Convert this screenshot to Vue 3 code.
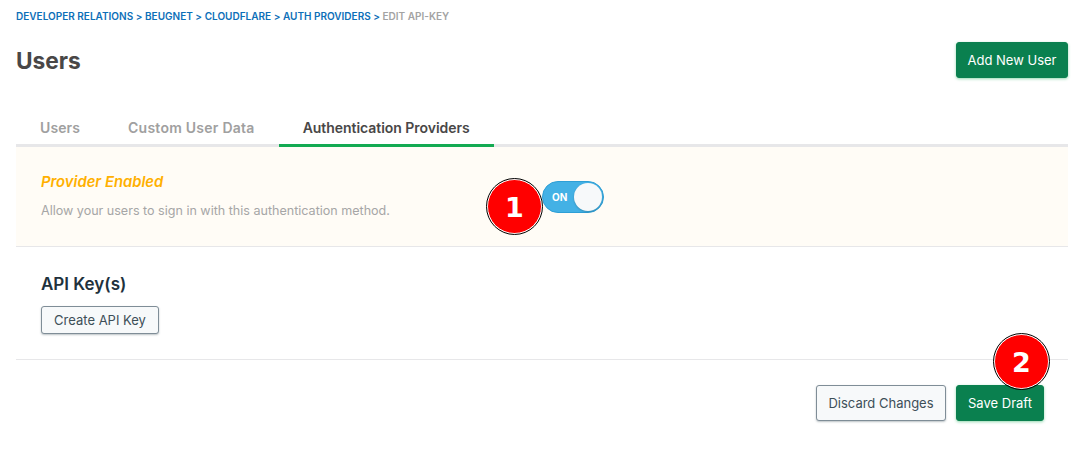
<script setup>
const crumbs = ['DEVELOPER RELATIONS', 'BEUGNET', 'CLOUDFLARE', 'AUTH PROVIDERS']
const tabs = [
  { label: 'Users', key: 'users', active: false },
  { label: 'Custom User Data', key: 'custom', active: false },
  { label: 'Authentication Providers', key: 'auth', active: true }
]
</script>

<template>
  <div class="page">
    <nav class="crumbs">
      <template v-for="c in crumbs" :key="c"><span class="crumb">{{ c }} &gt; </span></template>
      <span class="crumb-current">EDIT API-KEY</span>
    </nav>
    <header class="head">
      <h1 class="title">Users</h1>
      <button class="btn primary add">Add New User</button>
    </header>
    <div class="tabs">
      <div v-for="t in tabs" :key="t.key" class="tab" :class="[t.key, { active: t.active }]">{{ t.label }}</div>
    </div>
    <section class="banner">
      <div class="banner-text">
        <div class="banner-title">Provider Enabled</div>
        <div class="banner-desc">Allow your users to sign in with this authentication method.</div>
      </div>
      <div class="toggle">
        <span class="toggle-label">ON</span>
        <span class="knob"></span>
        <span class="badge">1</span>
      </div>
    </section>
    <section class="keys">
      <h2 class="keys-title">API Key(s)</h2>
      <button class="btn secondary create">Create API Key</button>
    </section>
    <footer class="foot">
      <button class="btn secondary discard">Discard Changes</button>
      <button class="btn primary save">Save Draft<span class="badge two">2</span></button>
    </footer>
  </div>
</template>

<style>
html, body { margin: 0; background: #fff; }
</style>

<style scoped>
.page {
  box-sizing: border-box;
  width: 1085px;
  height: 458px;
  padding: 11px 17px 0 16px;
  font-family: Inter, "Liberation Sans", sans-serif;
  overflow: hidden;
}
.crumbs {
  height: 12px;
  font-size: 10px;
  letter-spacing: .01px;
  line-height: 11px;
  font-weight: 600;
  white-space: pre;
}
.crumb { color: #0d6fb8; }
.crumb-current { color: #a3a3a3; }
.head {
  display: flex;
  justify-content: space-between;
  align-items: flex-start;
  margin-top: 19px;
  height: 36px;
}
.title {
  margin: 0;
  padding-top: 1px;
  font-size: 22.7px;
  line-height: 36px;
  font-weight: 700;
  color: #494747;
}
.btn {
  box-sizing: border-box;
  font-family: inherit;
  font-size: 13px;
  border-radius: 3px;
  padding: 0;
  cursor: pointer;
  position: relative;
}
.primary {
  background: #0a804f;
  border: 1px solid #0a804f;
  color: #fff;
  box-shadow: 0 1px 3px rgba(19, 170, 82, .45);
}
.secondary {
  background: #f7f9fa;
  border: 1px solid #7f8d97;
  color: #3d4f58;
  box-shadow: 0 1px 2px rgba(61, 79, 88, .35);
}
.add { width: 112px; height: 36px; }
.tabs {
  display: flex;
  margin-top: 30px;
  height: 36px;
  border-bottom: 3px solid #e7e7e9;
}
.tab {
  box-sizing: content-box;
  height: 36px;
  line-height: 39px;
  padding: 0 24px;
  font-size: 14px;
  font-weight: 600;
  color: #a0a0a0;
}
.tab.users { letter-spacing: .1px; }
.tab.custom { letter-spacing: .25px; }
.tab.active {
  color: #494747;
  letter-spacing: -.04px;
  border-bottom: 3px solid #13aa52;
}
.banner {
  display: flex;
  height: 100px;
  box-sizing: border-box;
  background: #fffcf6;
  border-bottom: 1px solid #e7e7e9;
  padding-left: 25px;
}
.banner-text { width: 501px; }
.banner-title {
  margin-top: 26px;
  font-size: 14.8px;
  line-height: 18px;
  font-weight: 600;
  font-style: italic;
  color: #ffb000;
}
.banner-desc {
  margin-top: 12px;
  font-size: 12.55px;
  line-height: 16px;
  color: #a6a6a6;
}
.toggle {
  position: relative;
  box-sizing: border-box;
  width: 62px;
  height: 32px;
  margin-top: 34px;
  border-radius: 16px;
  background: #43b1e5;
  border: 1px solid #2e9fd6;
}
.toggle-label {
  position: absolute;
  left: 9px;
  top: 9px;
  font-size: 10px;
  line-height: 12px;
  font-weight: 700;
  color: #fff;
}
.knob {
  position: absolute;
  right: 0;
  top: 0;
  width: 28px;
  height: 28px;
  margin: 1px;
  border-radius: 50%;
  background: #f7f9fa;
  box-shadow: 0 1px 2px rgba(0, 0, 0, .2);
}
.badge {
  position: absolute;
  left: -56px;
  top: -3px;
  box-sizing: border-box;
  width: 55px;
  height: 55px;
  border-radius: 50%;
  background: #f00;
  border: 1px solid #fff;
  outline: 1px solid #000;
  color: #fff;
  font-family: "DejaVu Sans", sans-serif;
  font-size: 27px;
  font-weight: 700;
  line-height: 55px;
  text-align: center;
}
.keys {
  height: 113px;
  box-sizing: border-box;
  padding: 27px 0 0 25px;
  border-bottom: 1px solid #e7e7e9;
}
.keys-title {
  margin: 0;
  font-size: 17px;
  line-height: 20px;
  font-weight: 600;
  color: #21313c;
}
.create {
  display: block;
  width: 118px;
  height: 28px;
  margin-top: 12px;
}
.foot {
  display: flex;
  gap: 10px;
  margin-top: 25px;
  padding-right: 24px;
  justify-content: flex-end;
}
.discard { width: 130px; height: 36px; }
.save { width: 88px; height: 36px; }
.two { left: 37px; top: -52px; }
</style>
